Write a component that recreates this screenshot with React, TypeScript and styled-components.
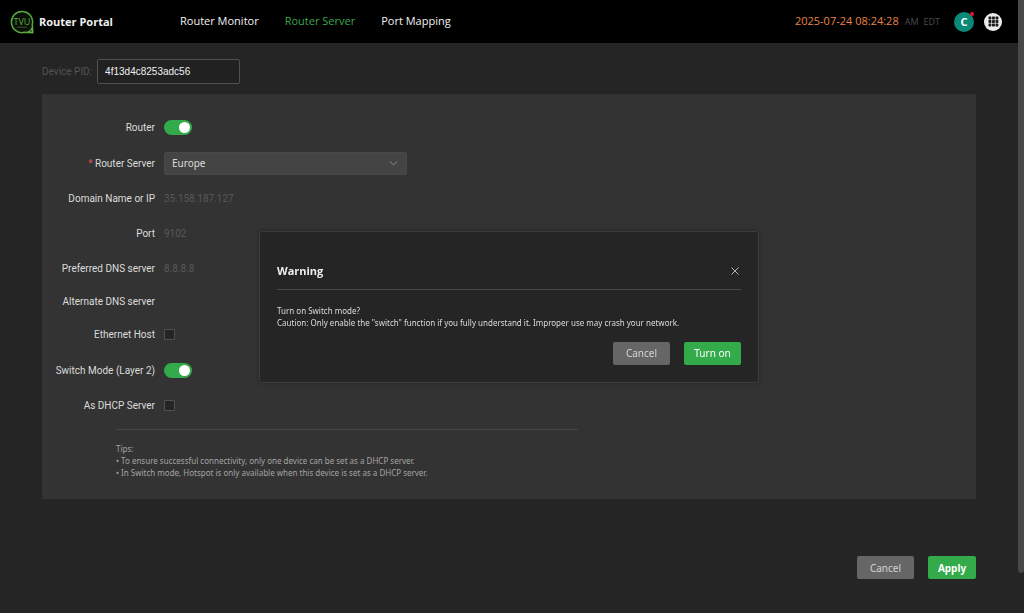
import React, { useState } from "react";
import styled, { createGlobalStyle } from "styled-components";

const GlobalStyle = createGlobalStyle`
  * { box-sizing: border-box; }
  body {
    margin: 0;
    background: #252525;
    color: #dcdcdc;
    font: 10px/16px "Noto Sans", "Open Sans", sans-serif;
  }
  button, input, select { font: inherit; color: inherit; margin: 0; }
`;

const Page = styled.div`
  display: flex;
  flex-direction: column;
  min-height: 100vh;
  padding-right: 6px;
`;

const ScrollThumb = styled.div`
  position: fixed;
  top: 0;
  right: 0;
  width: 6px;
  height: 93.4vh;
  background: #484848;
  border-radius: 0 0 3px 3px;
`;

const Header = styled.header`
  display: flex;
  align-items: center;
  height: 43px;
  padding: 0 16px 0 10px;
  background: #000;
  font-family: "Open Sans", "Noto Sans", sans-serif;
`;

const Brand = styled.div`
  display: flex;
  align-items: center;
  gap: 5px;
  width: 170px;
  padding-top: 1px;
  color: #f0f0f0;
  font-size: 11px;
  font-weight: 700;
`;

const Nav = styled.nav`
  display: flex;
  gap: 26px;
  padding-bottom: 2px;
  font-size: 11px;
`;

const NavLink = styled.a<{ $active?: boolean }>`
  color: ${(p) => (p.$active ? "#3aa64c" : "#f2f2f2")};
  text-decoration: none;
`;

const Clock = styled.div`
  display: flex;
  align-items: baseline;
  gap: 5px;
  margin-left: auto;
  color: #4c4c4c;
  font-size: 9px;
`;

const Time = styled.time`
  padding-right: 1px;
  color: #e8844a;
  font-size: 11px;
`;

const Avatar = styled.button`
  position: relative;
  width: 20px;
  height: 20px;
  margin-left: 14px;
  padding: 0;
  border: 0;
  border-radius: 50%;
  background: #0c8a78;
  color: #fff;
  font-size: 11px;
  font-weight: 700;
  line-height: 20px;

  &::after {
    content: "";
    position: absolute;
    top: 0;
    right: 0;
    width: 4px;
    height: 4px;
    border-radius: 50%;
    background: #f0142f;
  }
`;

const AppsButton = styled.button`
  display: grid;
  place-items: center;
  width: 18px;
  height: 18px;
  margin-left: 10px;
  padding: 0;
  border: 0;
  border-radius: 50%;
  background: #ececec;
`;

const Main = styled.main`
  padding: 16px 42px 0;
`;

const DeviceRow = styled.div`
  display: flex;
  align-items: center;
  gap: 5px;
  color: #525252;
  font-family: Roboto, "Noto Sans", sans-serif;
`;

const DeviceInput = styled.input`
  width: 143px;
  height: 25px;
  padding: 0 7px;
  border: 1px solid #505050;
  border-radius: 2px;
  background: #212121;
  color: #f0f0f0;
  font-family: "Liberation Sans", Arial, sans-serif;
  font-size: 10px;
`;

const Panel = styled.form`
  display: flex;
  flex-direction: column;
  gap: 12px;
  margin-top: 10px;
  padding: 21px 16px 20px;
  background: #333;
`;

const Row = styled.div<{ $kind?: "control" | "text" | "empty" }>`
  display: grid;
  grid-template-columns: 97px 1fr;
  align-items: center;
  gap: 9px;
  height: ${(p) => (p.$kind === "empty" ? 19 : p.$kind === "text" ? 23 : 24)}px;
  font-family: Roboto, "Noto Sans", sans-serif;
`;

const Label = styled.label<{ $required?: boolean }>`
  justify-self: end;
  padding-top: 1px;
  white-space: nowrap;

  &::before {
    content: "${(p) => (p.$required ? "* " : "")}";
    color: #e04f4f;
  }
`;

const Value = styled.output`
  padding-top: 1px;
  color: #585858;
`;

const Switch = styled.input`
  appearance: none;
  display: block;
  width: 28px;
  height: 15px;
  padding: 2px;
  border-radius: 8px;
  background: #5a5a5a;

  &::before {
    content: "";
    display: block;
    width: 11px;
    height: 11px;
    border-radius: 50%;
    background: #fff;
  }

  &:checked { background: #34ab4b; }
  &:checked::before { margin-left: auto; }
`;

const Checkbox = styled.input`
  appearance: none;
  display: block;
  width: 11px;
  height: 11px;
  border: 1px solid #505050;
  border-radius: 1px;
  background: #252525;

  &:checked { background: #34ab4b; }
`;

const SelectBox = styled.div`
  position: relative;
  width: 243px;

  svg {
    position: absolute;
    top: 8px;
    right: 9px;
    pointer-events: none;
  }
`;

const Select = styled.select`
  appearance: none;
  display: block;
  width: 100%;
  height: 23px;
  padding: 0 7px;
  border: 1px solid #484848;
  border-radius: 2px;
  background: #444;
  font-family: "Noto Sans", "Open Sans", sans-serif;
`;

const Tips = styled.section`
  width: 462px;
  margin: 0 58px;
  padding-top: 13px;
  border-top: 1px solid #464646;
  color: #a4a4a4;
  font-size: 8px;
  line-height: 12px;

  p { margin: 0; }
`;

const Button = styled.button<{ $tone?: "primary"; $strong?: boolean }>`
  height: 23px;
  padding: 0;
  width: ${(p) => (p.$strong ? 48 : 57)}px;
  border: 0;
  border-radius: 2px;
  background: ${(p) => (p.$tone === "primary" ? "#34ab4b" : "#666")};
  color: ${(p) => (p.$tone === "primary" ? "#fff" : "#d4d4d4")};
  font-weight: ${(p) => (p.$strong ? 700 : 400)};
`;

const Actions = styled.div`
  display: flex;
  justify-content: flex-end;
  gap: 14px;
`;

const PageActions = styled(Actions)`
  padding: 57px 0 34px;
`;

const Overlay = styled.div`
  position: fixed;
  inset: 0 6px 0 0;
  display: grid;
  place-items: center;
`;

const Dialog = styled.section`
  width: 500px;
  max-width: 100%;
  padding: 29px 17px 17px;
  border: 1px solid #3c3c3c;
  border-radius: 3px;
  background: #252525;
  box-shadow: 0 0 4px rgba(0, 0, 0, 0.3);
`;

const DialogHead = styled.header`
  display: flex;
  align-items: center;
  justify-content: space-between;
  height: 29px;
  padding-bottom: 8px;
  border-bottom: 1px solid #484848;

  h2 {
    margin: 0;
    color: #eee;
    font: 700 11px/16px "Open Sans", "Noto Sans", sans-serif;
  }
`;

const CloseButton = styled.button`
  display: grid;
  place-items: center;
  width: 12px;
  height: 12px;
  padding: 0;
  border: 0;
  background: none;
  color: #b4b4b4;
`;

const DialogText = styled.p`
  margin: 15px 0 13px;
  font-size: 8px;
  line-height: 12px;
`;

function Logo() {
  return (
    <svg width="24" height="24" viewBox="0 0 24 24" role="img" aria-label="TVU">
      <path d="M22.3 14.5A10.6 10.6 0 1 0 14.5 22.3L22.8 22.8Z" fill="#0a1008" stroke="#58a83e" strokeWidth="1.5" strokeLinejoin="round" />
      <path d="M22.4 16.5L22.8 22.8L16.5 22.4Q20.5 20.6 22.4 16.5Z" fill="#62b446" />
      <circle cx="21" cy="21" r="0.8" fill="#0a1008" />
      <text x="12" y="14.6" textAnchor="middle" fontFamily="Open Sans, sans-serif" fontSize="9" fontWeight="400" fill="#58a83e">TVU</text>
      <path d="M7 17.2H17" stroke="#2f5c22" strokeWidth="1" />
    </svg>
  );
}

function AppsIcon() {
  const steps = [0.5, 4, 7.5];
  return (
    <svg width="11" height="11" viewBox="0 0 11 11" aria-hidden="true">
      {steps.flatMap((y) =>
        steps.map((x) => <rect key={`${x}-${y}`} x={x} y={y} width="2.9" height="2.9" rx="0.6" fill="#1c1c1c" />)
      )}
    </svg>
  );
}

export default function App() {
  const [pid, setPid] = useState("4f13d4c8253adc56");
  const [open, setOpen] = useState(true);
  return (
    <>
      <GlobalStyle />
      <Page>
        <Header>
          <Brand>
            <Logo />
            Router Portal
          </Brand>
          <Nav>
            <NavLink href="#monitor">Router Monitor</NavLink>
            <NavLink href="#server" $active>Router Server</NavLink>
            <NavLink href="#mapping">Port Mapping</NavLink>
          </Nav>
          <Clock>
            <Time>2025-07-24 08:24:28</Time>
            <span>AM</span>
            <span>EDT</span>
          </Clock>
          <Avatar type="button">C</Avatar>
          <AppsButton type="button" aria-label="Apps">
            <AppsIcon />
          </AppsButton>
        </Header>
        <Main>
          <DeviceRow>
            <label htmlFor="pid">Device PID:</label>
            <DeviceInput id="pid" value={pid} onChange={(e) => setPid(e.target.value)} />
          </DeviceRow>
          <Panel>
            <Row>
              <Label htmlFor="router">Router</Label>
              <Switch id="router" type="checkbox" role="switch" defaultChecked />
            </Row>
            <Row>
              <Label htmlFor="region" $required>Router Server</Label>
              <SelectBox>
                <Select id="region" defaultValue="Europe">
                  <option>Europe</option>
                </Select>
                <svg width="9" height="7" viewBox="0 0 9 7" fill="none" stroke="#8c8c8c" aria-hidden="true">
                  <path d="M1 1.5L4.5 5L8 1.5" />
                </svg>
              </SelectBox>
            </Row>
            <Row $kind="text">
              <Label htmlFor="domain">Domain Name or IP</Label>
              <Value id="domain">35.158.187.127</Value>
            </Row>
            <Row $kind="text">
              <Label htmlFor="port">Port</Label>
              <Value id="port">9102</Value>
            </Row>
            <Row $kind="text">
              <Label htmlFor="dns1">Preferred DNS server</Label>
              <Value id="dns1">8.8.8.8</Value>
            </Row>
            <Row $kind="empty">
              <Label htmlFor="dns2">Alternate DNS server</Label>
              <Value id="dns2" />
            </Row>
            <Row $kind="text">
              <Label htmlFor="ethernet">Ethernet Host</Label>
              <Checkbox id="ethernet" type="checkbox" />
            </Row>
            <Row>
              <Label htmlFor="switch">Switch Mode (Layer 2)</Label>
              <Switch id="switch" type="checkbox" role="switch" defaultChecked />
            </Row>
            <Row $kind="text">
              <Label htmlFor="dhcp">As DHCP Server</Label>
              <Checkbox id="dhcp" type="checkbox" />
            </Row>
            <Tips>
              <p>Tips:</p>
              <p>• To ensure successful connectivity, only one device can be set as a DHCP server.</p>
              <p>• In Switch mode, Hotspot is only available when this device is set as a DHCP server.</p>
            </Tips>
          </Panel>
          <PageActions>
            <Button type="button">Cancel</Button>
            <Button type="button" $tone="primary" $strong>Apply</Button>
          </PageActions>
        </Main>
      </Page>
      <ScrollThumb />
      {open && (
        <Overlay>
          <Dialog role="dialog" aria-labelledby="warning">
            <DialogHead>
              <h2 id="warning">Warning</h2>
              <CloseButton type="button" aria-label="Close" onClick={() => setOpen(false)}>
                <svg width="10" height="10" viewBox="0 0 10 10" stroke="currentColor" aria-hidden="true">
                  <path d="M1.5 1.5L8.5 8.5M8.5 1.5L1.5 8.5" />
                </svg>
              </CloseButton>
            </DialogHead>
            <DialogText>
              Turn on Switch mode?
              <br />
              Caution: Only enable the "switch" function if you fully understand it. Improper use may crash your network.
            </DialogText>
            <Actions>
              <Button type="button" onClick={() => setOpen(false)}>Cancel</Button>
              <Button type="button" $tone="primary" onClick={() => setOpen(false)}>Turn on</Button>
            </Actions>
          </Dialog>
        </Overlay>
      )}
    </>
  );
}
